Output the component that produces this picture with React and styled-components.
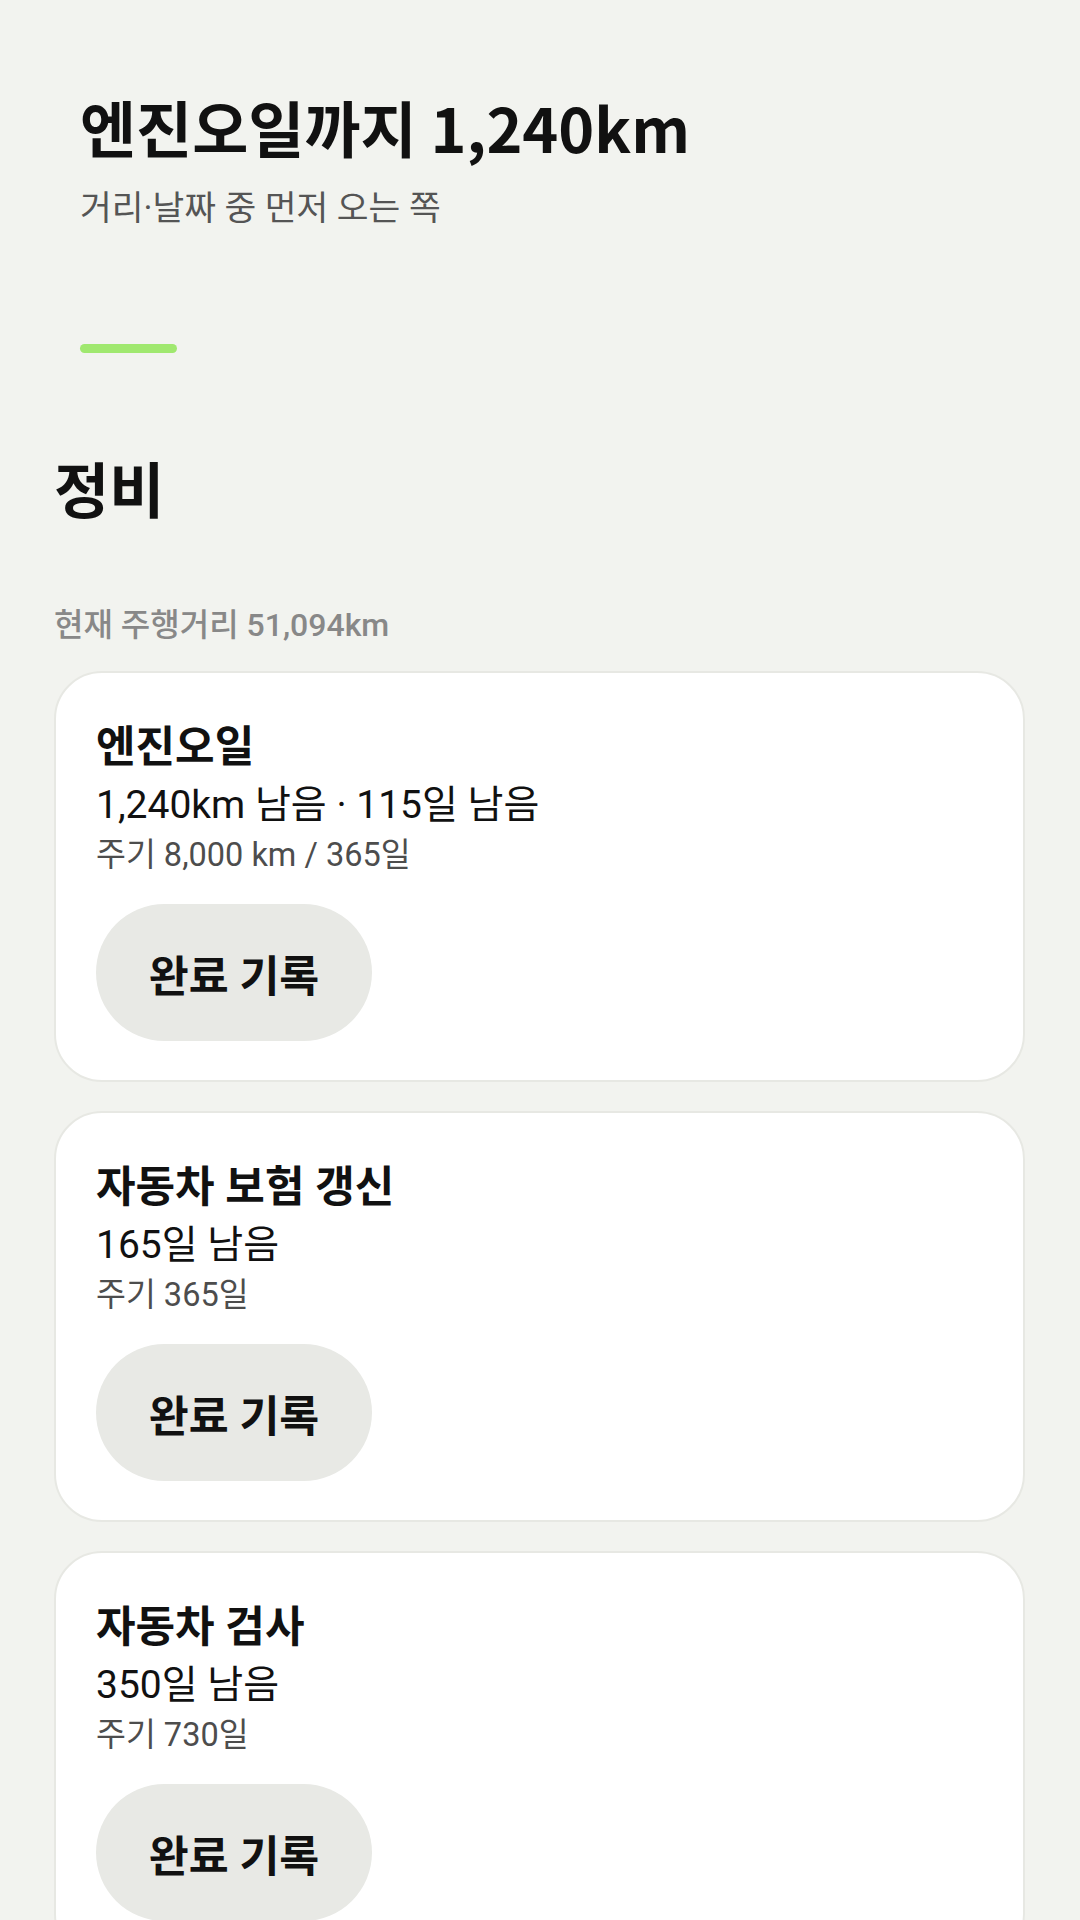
import React from "react";
import styled, { createGlobalStyle } from "styled-components";

const GlobalStyle = createGlobalStyle`
  body {
    margin: 0;
    background: #f2f3ef;
    font-family: Roboto, "Noto Sans CJK KR", sans-serif;
    color: #111;
  }
`;

const Page = styled.main`
  display: flex;
  flex-direction: column;
  padding: 0 55px 0 54px;
`;

const Hero = styled.header`
  padding: 87px 26px 0;
`;

const HeroTitle = styled.h1`
  margin: 0;
  font-family: "Noto Sans CJK KR", sans-serif;
  font-size: 61px;
  font-weight: 700;
  line-height: 80px;
`;

const HeroSub = styled.p`
  margin: 19px 0 0;
  font-size: 34.5px;
  line-height: 44px;
  color: #555;
`;

const Accent = styled.div`
  width: 97px;
  height: 9px;
  border-radius: 5px;
  background: #a0e86f;
  margin-top: 114px;
`;

const SectionTitle = styled.h2`
  margin: 94px 0 0;
  font-family: "Noto Sans CJK KR", sans-serif;
  font-size: 60px;
  font-weight: 700;
  line-height: 80px;
`;

const Odometer = styled.p`
  margin: 78px 0 0;
  font-size: 32px;
  font-weight: 500;
  line-height: 40px;
  color: #888;
`;

const List = styled.div`
  display: flex;
  flex-direction: column;
  gap: 29px;
  margin-top: 26px;
`;

const Card = styled.section`
  background: #fff;
  border: 2px solid #e7e8e3;
  border-radius: 48px;
  padding: 46px 40px 39px;
`;

const CardTitle = styled.h3`
  margin: 0;
  font-size: 43px;
  font-weight: 700;
  line-height: 56px;
`;

const Remaining = styled.p`
  margin: 5px 0 0;
  font-size: 39px;
  line-height: 50px;
`;

const Cycle = styled.p`
  margin: 4px 0 0;
  font-size: 32.5px;
  line-height: 42px;
  color: #4d4d4d;
`;

const DoneButton = styled.button`
  display: block;
  margin-top: 28px;
  width: 276px;
  height: 137px;
  border: none;
  border-radius: 69px;
  background: #e8e9e5;
  font-family: inherit;
  font-size: 43.4px;
  font-weight: 700;
  color: #111;
`;

const items = [
  { title: "엔진오일", remaining: "1,240km 남음 · 115일 남음", cycle: "주기 8,000 km / 365일" },
  { title: "자동차 보험 갱신", remaining: "165일 남음", cycle: "주기 365일" },
  { title: "자동차 검사", remaining: "350일 남음", cycle: "주기 730일" },
];

export default function App() {
  return (
    <>
      <GlobalStyle />
      <Page>
        <Hero>
          <HeroTitle>엔진오일까지 1,240km</HeroTitle>
          <HeroSub>거리·날짜 중 먼저 오는 쪽</HeroSub>
          <Accent />
        </Hero>
        <SectionTitle>정비</SectionTitle>
        <Odometer>현재 주행거리 51,094km</Odometer>
        <List>
          {items.map((item) => (
            <Card key={item.title}>
              <CardTitle>{item.title}</CardTitle>
              <Remaining>{item.remaining}</Remaining>
              <Cycle>{item.cycle}</Cycle>
              <DoneButton>완료 기록</DoneButton>
            </Card>
          ))}
        </List>
      </Page>
    </>
  );
}
